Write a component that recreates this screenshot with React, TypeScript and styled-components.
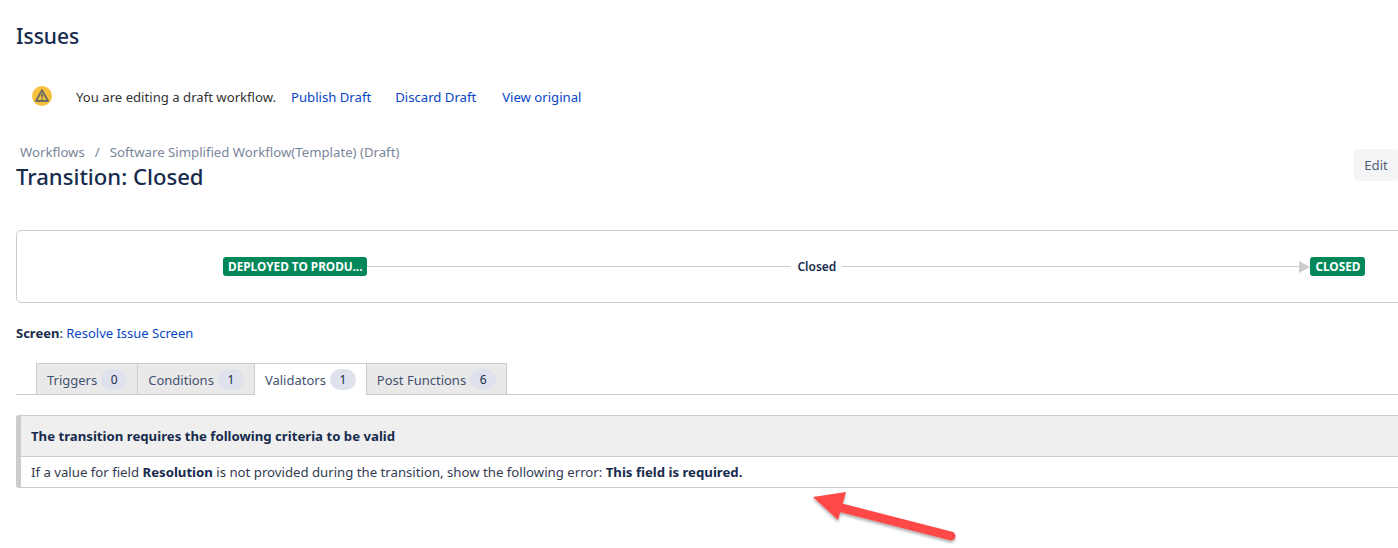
import React from "react";
import styled, { createGlobalStyle } from "styled-components";

const GlobalStyle = createGlobalStyle`
  html, body {
    margin: 0;
    padding: 0;
    background: #ffffff;
  }
  body {
    font-family: "Noto Sans", "Open Sans", "Liberation Sans", sans-serif;
    font-size: 13.2px;
    color: #172b4d;
  }
`;

const tabs = [
  { label: "Triggers", count: 0 },
  { label: "Conditions", count: 1 },
  { label: "Validators", count: 1, active: true },
  { label: "Post Functions", count: 6 },
];

const App: React.FC = () => {
  return (
    <Page>
      <GlobalStyle />
      <Title>Issues</Title>

      <DraftBar>
        <WarnIcon viewBox="0 0 20 20" aria-hidden="true">
          <circle cx="10" cy="10" r="10" fill="#f6bf3e" />
          <path d="M10 4.2 16 15H4z" fill="none" stroke="#6b6b62" strokeWidth="1.9" strokeLinejoin="round" />
          <path d="M10 8v3.4M10 12.6v1.2" stroke="#6b6b62" strokeWidth="1.7" />
        </WarnIcon>
        <DraftText>You are editing a draft workflow.</DraftText>
        <DraftLinks>
          <Link href="#">Publish Draft</Link>
          <Link href="#">Discard Draft</Link>
          <Link href="#">View original</Link>
        </DraftLinks>
      </DraftBar>

      <HeaderRow>
        <div>
          <Breadcrumbs>
            <span>Workflows</span>
            <span>/</span>
            <span>Software Simplified Workflow(Template) (Draft)</span>
          </Breadcrumbs>
          <Heading>Transition: Closed</Heading>
        </div>
        <EditButton>Edit</EditButton>
      </HeaderRow>

      <FlowBox>
        <Lozenge>DEPLOYED TO PRODU...</Lozenge>
        <FlowLine $width={424} />
        <FlowLabel>Closed</FlowLabel>
        <FlowLine $width={457} />
        <ArrowHead />
        <Lozenge>CLOSED</Lozenge>
      </FlowBox>

      <ScreenRow>
        <strong>Screen</strong>: <Link href="#">Resolve Issue Screen</Link>
      </ScreenRow>

      <TabBar>
        {tabs.map((tab) => (
          <Tab key={tab.label} $active={tab.active}>
            <TabLabel>{tab.label}</TabLabel>
            <Count>{tab.count}</Count>
          </Tab>
        ))}
      </TabBar>

      <Panel>
        <PanelHeader>The transition requires the following criteria to be valid</PanelHeader>
        <PanelBody>
          If a value for field <strong>Resolution</strong> is not provided during the transition, show the following
          error: <strong>This field is required.</strong>
        </PanelBody>
      </Panel>

      <RedArrow viewBox="0 0 160 60" aria-hidden="true">
        <defs>
          <filter id="arrowShadow" x="-10%" y="-20%" width="120%" height="150%">
            <feDropShadow dx="0" dy="2" stdDeviation="1.5" floodColor="#000" floodOpacity="0.35" />
          </filter>
        </defs>
        <g filter="url(#arrowShadow)">
          <path d="M34 17 147 46" stroke="#ff4848" strokeWidth="9" strokeLinecap="round" />
          <path d="M9 7 42 2 34 30z" fill="#ff4848" />
        </g>
      </RedArrow>
    </Page>
  );
};

const Page = styled.div`
  position: relative;
  width: 1398px;
  height: 548px;
  padding: 21px 0 0 16px;
  box-sizing: border-box;
  overflow: hidden;
`;

const Title = styled.h1`
  margin: 0;
  font-size: 21px;
  line-height: 30px;
  font-weight: 500;
  color: #172b4d;
`;

const DraftBar = styled.div`
  display: flex;
  align-items: center;
  margin-top: 35px;
  padding-left: 16px;
  height: 20px;
  font-size: 13.15px;
`;

const WarnIcon = styled.svg`
  width: 20px;
  height: 20px;
  margin-right: 24px;
`;

const DraftText = styled.span`
  margin-right: 15px;
  padding-top: 2px;
  color: #333;
`;

const DraftLinks = styled.div`
  display: flex;
  gap: 24px;
  padding-top: 2px;

  a:last-child {
    margin-left: 2px;
  }
`;

const Link = styled.a`
  color: #0747c6;
  text-decoration: none;
`;

const HeaderRow = styled.div`
  display: flex;
  justify-content: space-between;
  margin-top: 37px;
`;

const Breadcrumbs = styled.div`
  display: flex;
  gap: 10px;
  padding-left: 4px;
  color: #7a869a;
  line-height: 18px;
`;

const Heading = styled.h2`
  margin: 0;
  font-size: 22.1px;
  line-height: 31px;
  font-weight: 500;
  color: #172b4d;
`;

const EditButton = styled.button`
  align-self: flex-start;
  width: 44px;
  height: 32px;
  margin-top: 6px;
  padding: 0;
  border: 0;
  border-radius: 3px;
  background: #f4f5f7;
  color: #505f79;
  font: inherit;
`;

const FlowBox = styled.div`
  display: flex;
  align-items: center;
  width: 1420px;
  height: 73px;
  margin-top: 38px;
  padding-left: 206px;
  border: 1px solid #cccccc;
  border-radius: 5px;
  box-sizing: border-box;
`;

const Lozenge = styled.span`
  padding: 0 5px;
  height: 19px;
  line-height: 19px;
  border-radius: 3px;
  background: #00875a;
  color: #ffffff;
  font-size: 11.8px;
  font-weight: 700;
  white-space: nowrap;
`;

const FlowLine = styled.span<{ $width: number }>`
  width: ${(p) => p.$width}px;
  height: 1px;
  background: #cccccc;
`;

const FlowLabel = styled.span`
  padding: 0 6px;
  font-size: 12px;
  font-weight: 600;
  color: #172b4d;
`;

const ArrowHead = styled.span`
  width: 0;
  height: 0;
  border-left: 11px solid #cccccc;
  border-top: 6px solid transparent;
  border-bottom: 6px solid transparent;
`;

const ScreenRow = styled.div`
  margin-top: 21px;
  line-height: 18px;
  font-size: 13px;

  strong {
    font-weight: 700;
  }
`;

const TabBar = styled.div`
  display: flex;
  height: 32px;
  margin-top: 21px;
  padding-left: 21px;
  width: 1420px;
  box-sizing: border-box;
  border-bottom: 1px solid #cccccc;
`;

const Tab = styled.div<{ $active?: boolean }>`
  display: flex;
  align-items: center;
  gap: 4px;
  height: ${(p) => (p.$active ? "32px" : "31px")};
  padding: 0 10px ${(p) => (p.$active ? "1px" : "0")} 10px;
  border: 1px solid #cccccc;
  border-bottom: 0;
  margin-left: -1px;
  box-sizing: border-box;
  background: ${(p) => (p.$active ? "#ffffff" : "#e9e9e9")};
  color: #42526e;
`;

const TabLabel = styled.span`
  padding-top: 2px;
  font-size: 13px;
`;

const Count = styled.span`
  display: inline-block;
  min-width: 26px;
  height: 21px;
  line-height: 21px;
  border-radius: 11px;
  background: #dfe1ec;
  color: #172b4d;
  font-size: 12px;
  text-align: center;
`;

const Panel = styled.div`
  width: 1420px;
  margin-top: 20px;
  border: 1px solid #cccccc;
  border-left-width: 5px;
  border-radius: 3px;
  box-sizing: border-box;
`;

const PanelHeader = styled.div`
  height: 40px;
  line-height: 40px;
  padding-left: 10px;
  background: #efefef;
  border-bottom: 1px solid #cccccc;
  font-weight: 700;
`;

const PanelBody = styled.div`
  height: 30px;
  line-height: 30px;
  padding-left: 10px;
  color: #333b52;

  strong {
    color: #172b4d;
  }
`;

const RedArrow = styled.svg`
  position: absolute;
  left: 804px;
  top: 490px;
  width: 160px;
  height: 60px;
`;

export default App;
